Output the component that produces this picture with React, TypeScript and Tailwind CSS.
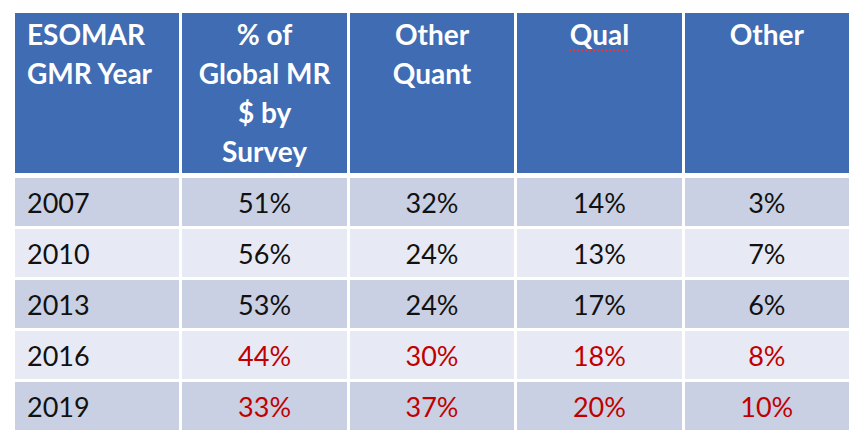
const rows = [
  { year: "2007", vals: ["51%", "32%", "14%", "3%"], red: false },
  { year: "2010", vals: ["56%", "24%", "13%", "7%"], red: false },
  { year: "2013", vals: ["53%", "24%", "17%", "6%"], red: false },
  { year: "2016", vals: ["44%", "30%", "18%", "8%"], red: true },
  { year: "2019", vals: ["33%", "37%", "20%", "10%"], red: true },
];

export default function App() {
  return (
    <div
      className="w-[865px] h-[441px] bg-white pt-[13px] pl-[15px]"
      style={{ fontFamily: "Lato, 'Open Sans', sans-serif" }}
    >
      <div className="w-[834px] flex flex-col bg-white">
        {/* header */}
        <div className="grid grid-cols-5 gap-x-[3px] h-[160px] mb-[5px] text-white font-bold text-[28px] leading-[39px]">
          <div className="bg-[#3f6cb3] pl-[12px] pt-[2px]">
            ESOMAR
            <br />
            GMR Year
          </div>
          <div className="bg-[#3f6cb3] text-center pt-[2px]">
            % of
            <br />
            Global MR
            <br />$ by
            <br />
            Survey
          </div>
          <div className="bg-[#3f6cb3] text-center pt-[2px]">
            Other
            <br />
            Quant
          </div>
          <div className="bg-[#3f6cb3] text-center pt-[2px]">
            <span className="underline decoration-dotted decoration-[#e03a3a] decoration-2 underline-offset-[4px]">
              Qual
            </span>
          </div>
          <div className="bg-[#3f6cb3] text-center pt-[2px]">Other</div>
        </div>

        {/* body */}
        <div className="flex flex-col gap-y-[3px] text-[27px]">
          {rows.map((r, i) => (
            <div
              key={r.year}
              className={
                "grid grid-cols-5 gap-x-[3px] h-[48px] " +
                (i % 2 === 0 ? "[&>div]:bg-[#c9d0e3]" : "[&>div]:bg-[#e7eaf4]")
              }
            >
              <div className="flex items-center pl-[12px] pt-[2px] text-[#111111]">
                {r.year}
              </div>
              {r.vals.map((v, j) => (
                <div
                  key={j}
                  className={
                    "flex items-center justify-center pt-[2px] " +
                    (r.red ? "text-[#c00000]" : "text-[#111111]")
                  }
                >
                  {v}
                </div>
              ))}
            </div>
          ))}
        </div>
      </div>
    </div>
  );
}
